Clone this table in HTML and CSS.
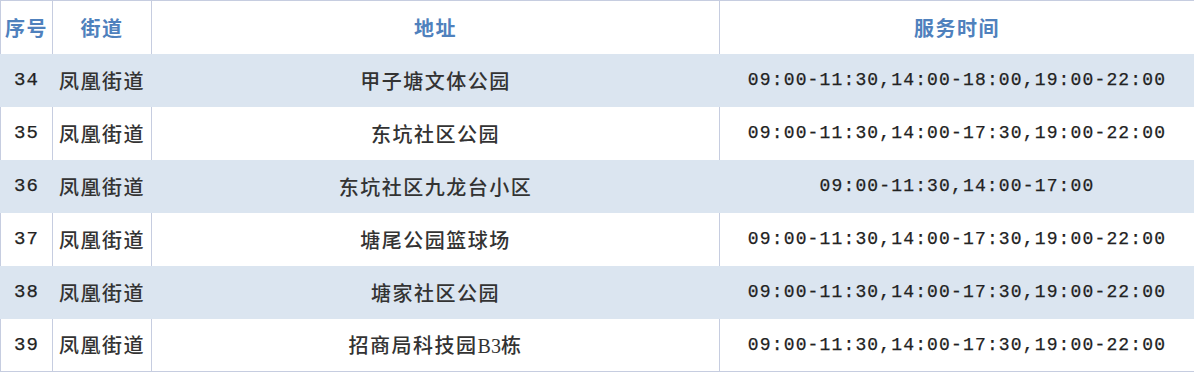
FILE: index.html
```html
<!DOCTYPE html>
<html lang="zh-CN">

<head>
    <meta charset="UTF-8">
    <meta name="viewport" content="width=device-width, initial-scale=1.0">
    <title>服务点列表</title>
    <link rel="stylesheet" href="styles.css">
</head>

<body>
    <table class="service-table">
        <colgroup>
            <col class="col-no">
            <col class="col-street">
            <col class="col-addr">
            <col class="col-time">
        </colgroup>
        <thead>
            <tr>
                <th>序号</th>
                <th>街道</th>
                <th>地址</th>
                <th>服务时间</th>
            </tr>
        </thead>
        <tbody>
            <tr class="stripe">
                <td class="num">34</td>
                <td>凤凰街道</td>
                <td>甲子塘文体公园</td>
                <td class="time">09:00-11:30,14:00-18:00,19:00-22:00</td>
            </tr>
            <tr>
                <td class="num">35</td>
                <td>凤凰街道</td>
                <td>东坑社区公园</td>
                <td class="time">09:00-11:30,14:00-17:30,19:00-22:00</td>
            </tr>
            <tr class="stripe">
                <td class="num">36</td>
                <td>凤凰街道</td>
                <td>东坑社区九龙台小区</td>
                <td class="time">09:00-11:30,14:00-17:00</td>
            </tr>
            <tr>
                <td class="num">37</td>
                <td>凤凰街道</td>
                <td>塘尾公园篮球场</td>
                <td class="time">09:00-11:30,14:00-17:30,19:00-22:00</td>
            </tr>
            <tr class="stripe">
                <td class="num">38</td>
                <td>凤凰街道</td>
                <td>塘家社区公园</td>
                <td class="time">09:00-11:30,14:00-17:30,19:00-22:00</td>
            </tr>
            <tr>
                <td class="num">39</td>
                <td>凤凰街道</td>
                <td>招商局科技园<span class="latin">B3</span>栋</td>
                <td class="time">09:00-11:30,14:00-17:30,19:00-22:00</td>
            </tr>
        </tbody>
    </table>
</body>

</html>
```

FILE: styles.css
```css
:root {
    --border-color: #c6cde0;
    --stripe-color: #dbe5f0;
    --header-color: #4f81bd;
    --text-color: #333;
}

* {
    margin: 0;
    padding: 0;
    box-sizing: border-box;
}

body {
    background: #fff;
    font-family: "Noto Sans CJK SC", "Noto Sans", sans-serif;
    color: var(--text-color);
}

.service-table {
    width: 1194px;
    border-collapse: collapse;
    table-layout: fixed;
    border: 1px solid var(--border-color);
}

.col-no {
    width: 52px;
}

.col-street {
    width: 99px;
}

.col-addr {
    width: 568px;
}

.col-time {
    width: 475px;
}

.service-table th,
.service-table td {
    height: 53px;
    text-align: center;
    vertical-align: middle;
    font-size: 20px;
    letter-spacing: 1.5px;
    border-left: 1px solid var(--border-color);
    border-right: 1px solid var(--border-color);
    white-space: nowrap;
    overflow: hidden;
}

.service-table th {
    color: var(--header-color);
    font-weight: bold;
}

.service-table td {
    font-weight: 500;
}

.service-table tr.stripe td {
    background: var(--stripe-color);
    border-left-color: var(--stripe-color);
    border-right-color: var(--stripe-color);
}

/* digits: mono, a little heavier than regular */
.service-table td.num,
.service-table td.time {
    font-family: "Liberation Mono", "DejaVu Sans Mono", monospace;
    font-weight: normal;
    color: #222;
    -webkit-text-stroke: 0.25px #222;
}

.service-table td.num {
    font-size: 19px;
    letter-spacing: 1px;
}

.service-table td.time {
    font-size: 18px;
    letter-spacing: 1.15px;
}

.latin {
    font-family: "Liberation Serif", serif;
    letter-spacing: 0;
}
```
